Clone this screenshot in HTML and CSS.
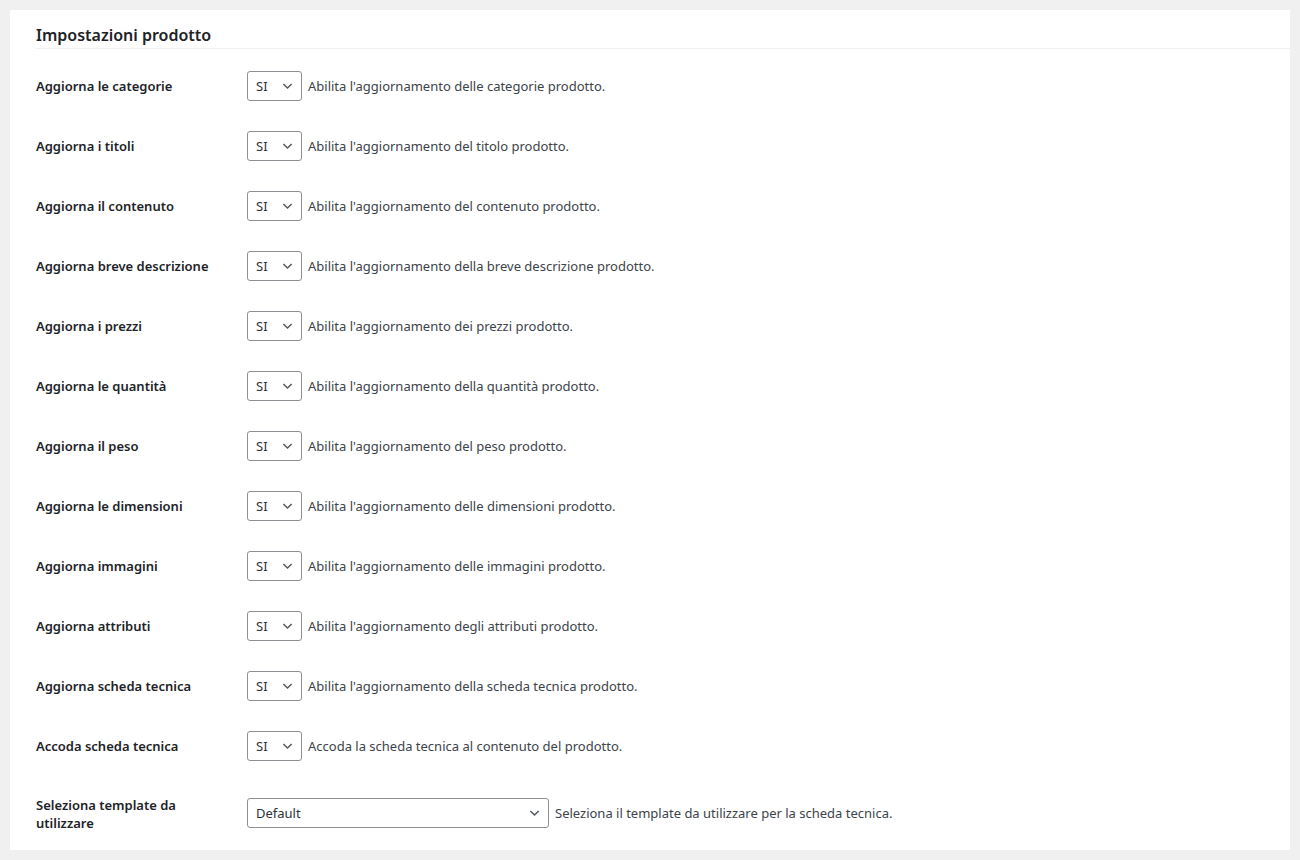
FILE: index.html
```html
<!DOCTYPE html>
<html lang="it">
<head>
  <meta charset="UTF-8" />
  <title>Impostazioni prodotto</title>
  <link rel="stylesheet" href="styles.css">
</head>
<body>

<div class="panel">
  <h2 class="panel-title">Impostazioni prodotto</h2>

  <div class="form-table">

    <div class="row">
      <div class="label">Aggiorna le categorie</div>
      <div class="field">
        <div class="select small"><span>SI</span><svg class="chev" viewBox="0 0 12 8"><path d="M1.5 1.8 6 6.2 10.5 1.8"/></svg></div>
        <span class="desc">Abilita l'aggiornamento delle categorie prodotto.</span>
      </div>
    </div>

    <div class="row">
      <div class="label">Aggiorna i titoli</div>
      <div class="field">
        <div class="select small"><span>SI</span><svg class="chev" viewBox="0 0 12 8"><path d="M1.5 1.8 6 6.2 10.5 1.8"/></svg></div>
        <span class="desc">Abilita l'aggiornamento del titolo prodotto.</span>
      </div>
    </div>

    <div class="row">
      <div class="label">Aggiorna il contenuto</div>
      <div class="field">
        <div class="select small"><span>SI</span><svg class="chev" viewBox="0 0 12 8"><path d="M1.5 1.8 6 6.2 10.5 1.8"/></svg></div>
        <span class="desc">Abilita l'aggiornamento del contenuto prodotto.</span>
      </div>
    </div>

    <div class="row">
      <div class="label">Aggiorna breve descrizione</div>
      <div class="field">
        <div class="select small"><span>SI</span><svg class="chev" viewBox="0 0 12 8"><path d="M1.5 1.8 6 6.2 10.5 1.8"/></svg></div>
        <span class="desc">Abilita l'aggiornamento della breve descrizione prodotto.</span>
      </div>
    </div>

    <div class="row">
      <div class="label">Aggiorna i prezzi</div>
      <div class="field">
        <div class="select small"><span>SI</span><svg class="chev" viewBox="0 0 12 8"><path d="M1.5 1.8 6 6.2 10.5 1.8"/></svg></div>
        <span class="desc">Abilita l'aggiornamento dei prezzi prodotto.</span>
      </div>
    </div>

    <div class="row">
      <div class="label">Aggiorna le quantità</div>
      <div class="field">
        <div class="select small"><span>SI</span><svg class="chev" viewBox="0 0 12 8"><path d="M1.5 1.8 6 6.2 10.5 1.8"/></svg></div>
        <span class="desc">Abilita l'aggiornamento della quantità prodotto.</span>
      </div>
    </div>

    <div class="row">
      <div class="label">Aggiorna il peso</div>
      <div class="field">
        <div class="select small"><span>SI</span><svg class="chev" viewBox="0 0 12 8"><path d="M1.5 1.8 6 6.2 10.5 1.8"/></svg></div>
        <span class="desc">Abilita l'aggiornamento del peso prodotto.</span>
      </div>
    </div>

    <div class="row">
      <div class="label">Aggiorna le dimensioni</div>
      <div class="field">
        <div class="select small"><span>SI</span><svg class="chev" viewBox="0 0 12 8"><path d="M1.5 1.8 6 6.2 10.5 1.8"/></svg></div>
        <span class="desc">Abilita l'aggiornamento delle dimensioni prodotto.</span>
      </div>
    </div>

    <div class="row">
      <div class="label">Aggiorna immagini</div>
      <div class="field">
        <div class="select small"><span>SI</span><svg class="chev" viewBox="0 0 12 8"><path d="M1.5 1.8 6 6.2 10.5 1.8"/></svg></div>
        <span class="desc">Abilita l'aggiornamento delle immagini prodotto.</span>
      </div>
    </div>

    <div class="row">
      <div class="label">Aggiorna attributi</div>
      <div class="field">
        <div class="select small"><span>SI</span><svg class="chev" viewBox="0 0 12 8"><path d="M1.5 1.8 6 6.2 10.5 1.8"/></svg></div>
        <span class="desc">Abilita l'aggiornamento degli attributi prodotto.</span>
      </div>
    </div>

    <div class="row">
      <div class="label">Aggiorna scheda tecnica</div>
      <div class="field">
        <div class="select small"><span>SI</span><svg class="chev" viewBox="0 0 12 8"><path d="M1.5 1.8 6 6.2 10.5 1.8"/></svg></div>
        <span class="desc">Abilita l'aggiornamento della scheda tecnica prodotto.</span>
      </div>
    </div>

    <div class="row">
      <div class="label">Accoda scheda tecnica</div>
      <div class="field">
        <div class="select small"><span>SI</span><svg class="chev" viewBox="0 0 12 8"><path d="M1.5 1.8 6 6.2 10.5 1.8"/></svg></div>
        <span class="desc">Accoda la scheda tecnica al contenuto del prodotto.</span>
      </div>
    </div>

    <div class="row">
      <div class="label">Seleziona template da utilizzare</div>
      <div class="field">
        <div class="select wide"><span>Default</span><svg class="chev" viewBox="0 0 12 8"><path d="M1.5 1.8 6 6.2 10.5 1.8"/></svg></div>
        <span class="desc">Seleziona il template da utilizzare per la scheda tecnica.</span>
      </div>
    </div>

  </div>
</div>

</body>
</html>
```

FILE: styles.css
```css
body {
  margin: 10px;
  background: #f0f0f1;
  font-family: "Noto Sans", "Open Sans", sans-serif;
  color: #1d2327;
}

.panel {
  background: #fff;
  padding-left: 26px;
}

.panel-title {
  margin: 0;
  padding: 15px 0 3px;
  font-size: 16px;
  line-height: 20px;
  font-weight: 600;
  color: #1d2327;
  border-bottom: 1px solid #f0f0f1;
}

.form-table {
  padding-top: 7px;
}

.row {
  display: flex;
  align-items: center;
}

.label {
  width: 201px;
  padding: 20px 10px 20px 0;
  font-size: 13px;
  font-weight: 600;
  line-height: 18px;
}

.row:last-child .label {
  padding-bottom: 18px;
}

.field {
  display: flex;
  align-items: center;
  gap: 6px;
  padding: 15px 10px 15px 0;
}

.select {
  box-sizing: border-box;
  height: 30px;
  border: 1px solid #8c8f94;
  border-radius: 3px;
  padding: 0 8px;
  display: flex;
  align-items: center;
  justify-content: space-between;
  font-size: 13px;
  color: #2c3338;
}

.select.small {
  width: 55px;
}

.select.wide {
  width: 302px;
}

.chev {
  width: 11px;
  height: 8px;
  fill: none;
  stroke: #50575e;
  stroke-width: 1.6;
}

.desc {
  font-size: 13px;
  color: #3c434a;
}
```
